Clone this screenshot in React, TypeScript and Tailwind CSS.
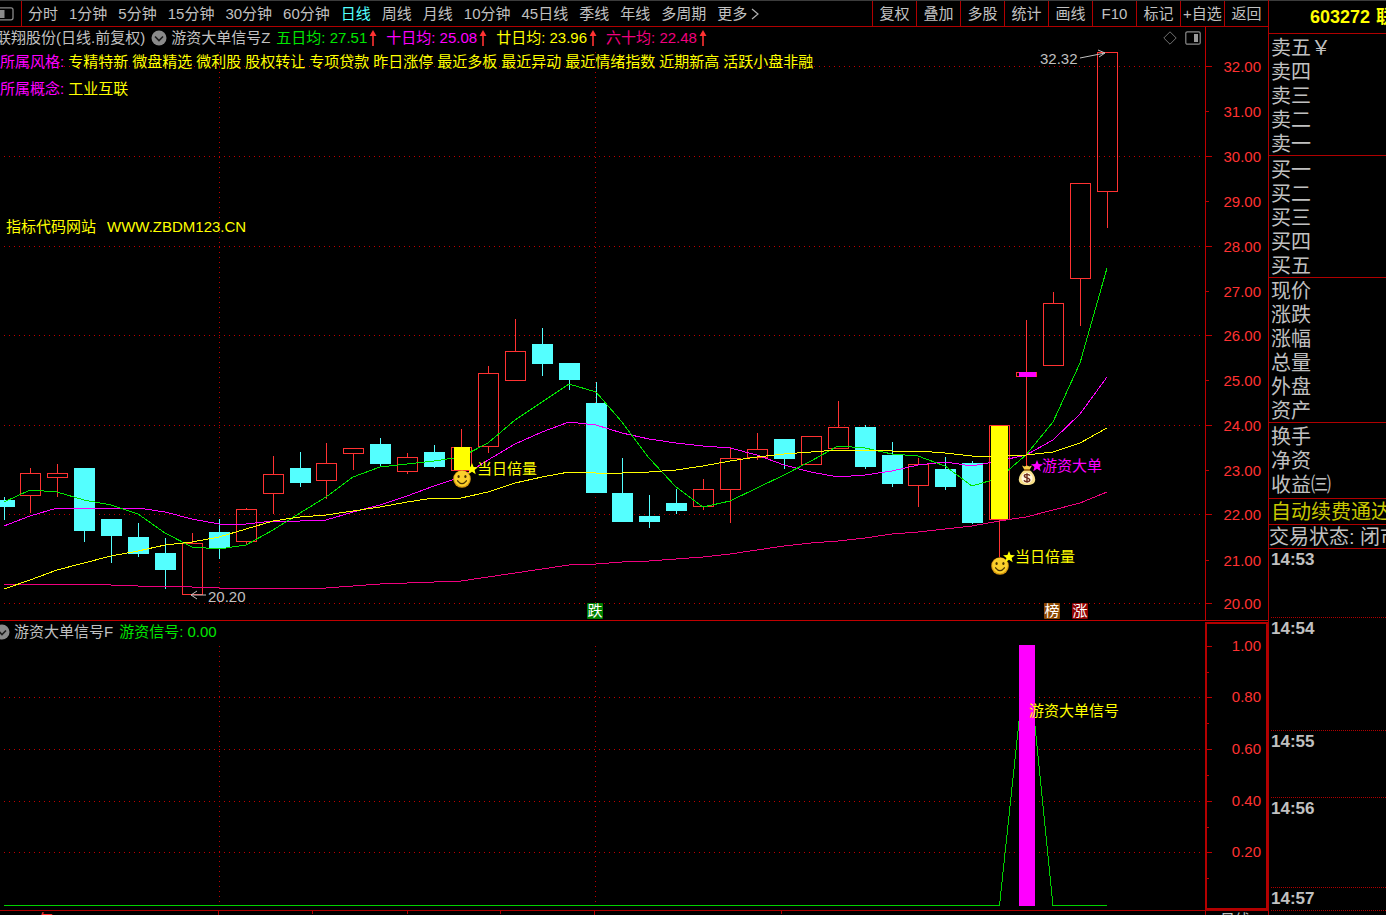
import { useState } from "react";

type Kind = "up" | "down";

interface Candle {
  kind: Kind;
  top: number;
  bottom: number;
  high: number;
  low: number;
}

const FONT = "font-['Liberation_Sans','Noto_Sans_CJK_SC',sans-serif]";

const PERIODS = [
  "分时", "1分钟", "5分钟", "15分钟", "30分钟", "60分钟", "日线", "周线", "月线",
  "10分钟", "45日线", "季线", "年线", "多周期",
];

const TOOLS = ["复权", "叠加", "多股", "统计", "画线", "F10", "标记", "+自选", "返回"];

const AVERAGES = [
  { label: "五日均", value: "27.51", color: "text-[#00e600]" },
  { label: "十日均", value: "25.08", color: "text-[#ff00ff]" },
  { label: "廿日均", value: "23.96", color: "text-[#ffff00]" },
  { label: "六十均", value: "22.48", color: "text-[#f0007f]" },
];

const STYLES = [
  "专精特新", "微盘精选", "微利股", "股权转让", "专项贷款", "昨日涨停", "最近多板",
  "最近异动", "最近情绪指数", "近期新高", "活跃小盘非融",
];

// kind, body top, body bottom, high, low
const RAW: [Kind, number, number, number, number][] = [
  ["down", 500, 507, 497, 520],
  ["up", 473, 496, 468, 513],
  ["up", 473, 478, 464, 497],
  ["down", 468, 531, 468, 542],
  ["down", 519, 536, 519, 563],
  ["down", 537, 554, 523, 557],
  ["down", 553, 570, 538, 589],
  ["up", 543, 595, 533, 595],
  ["down", 532, 548, 519, 559],
  ["up", 509, 542, 508, 544],
  ["up", 474, 494, 456, 514],
  ["down", 468, 483, 452, 487],
  ["up", 463, 481, 443, 499],
  ["up", 448, 454, 448, 470],
  ["down", 444, 464, 438, 467],
  ["up", 457, 472, 453, 474],
  ["down", 452, 467, 445, 468],
  ["up", 447, 471, 429, 471],
  ["up", 373, 447, 366, 453],
  ["up", 351, 381, 319, 381],
  ["down", 344, 364, 328, 376],
  ["down", 363, 380, 363, 390],
  ["down", 403, 493, 382, 493],
  ["down", 493, 522, 458, 522],
  ["down", 516, 522, 495, 528],
  ["down", 503, 511, 489, 514],
  ["up", 489, 507, 479, 510],
  ["up", 458, 490, 447, 523],
  ["up", 449, 458, 433, 460],
  ["down", 439, 459, 439, 469],
  ["up", 436, 465, 436, 465],
  ["up", 427, 449, 401, 449],
  ["down", 427, 467, 425, 469],
  ["down", 455, 484, 442, 487],
  ["up", 464, 486, 458, 507],
  ["down", 469, 487, 457, 490],
  ["down", 463, 523, 461, 524],
  ["up", 425, 520, 425, 557],
  ["up", 372, 377, 320, 466],
  ["up", 303, 366, 292, 366],
  ["up", 183, 279, 183, 326],
  ["up", 52, 192, 52, 228],
];

const CANDLES: Candle[] = RAW.map(([kind, top, bottom, high, low]) => ({ kind, top, bottom, high, low }));

const candleX = (i: number) => Math.round(3.5 + i * 26.91);

const MA5 = [
  502, 490, 492, 500, 505, 514, 533, 547, 549, 545, 530, 513, 497, 477, 467, 464, 461, 457, 443, 420, 402,
  384, 392, 422, 458, 487, 507, 501, 488, 475, 461, 446, 448, 454, 456, 466, 486, 478, 455, 422, 363, 268,
];
const MA10 = [
  526, 516, 508, 508, 508, 508, 512, 519, 524, 524, 521, 521, 520, 512, 505, 496, 486, 477, 460, 444, 432,
  422, 425, 433, 439, 443, 446, 448, 455, 465, 472, 477, 475, 471, 465, 462, 466, 461, 455, 440, 414, 377,
];
const MA20 = [
  589, 580, 570, 563, 556, 551, 545, 542, 537, 529, 521, 517, 515, 511, 507, 502, 498, 498, 492, 483, 477,
  472, 473, 473, 472, 470, 466, 461, 457, 454, 452, 450, 450, 451, 451, 453, 456, 456, 455, 452, 443, 428,
];
const MA60 = [
  584, 584, 584, 584, 585, 586, 586, 587, 588, 588, 588, 588, 588, 586, 584, 583, 582, 581, 577, 573, 569,
  565, 564, 562, 561, 559, 557, 554, 550, 546, 543, 541, 538, 534, 532, 529, 526, 521, 517, 510, 503, 492,
];

const toPoints = (ys: number[]) => ys.map((y, i) => `${candleX(i)},${y}`).join(" ");

const PRICES = [
  { label: "32.00", y: 66 }, { label: "31.00", y: 111 }, { label: "30.00", y: 156 },
  { label: "29.00", y: 201 }, { label: "28.00", y: 246 }, { label: "27.00", y: 291 },
  { label: "26.00", y: 335 }, { label: "25.00", y: 380 }, { label: "24.00", y: 425 },
  { label: "23.00", y: 470 }, { label: "22.00", y: 514 }, { label: "21.00", y: 560 },
  { label: "20.00", y: 603 },
];

const LEVELS = [
  { label: "1.00", y: 646 }, { label: "0.80", y: 697 }, { label: "0.60", y: 749 },
  { label: "0.40", y: 801 }, { label: "0.20", y: 852 },
];

const TICKS = [
  { time: "14:53", height: "h-[69px]" },
  { time: "14:54", height: "h-[113px]" },
  { time: "14:55", height: "h-[67px]" },
  { time: "14:56", height: "h-[90px]" },
  { time: "14:57", height: "h-[23px]" },
  { time: "15:00", height: "h-[23px]" },
];

function CollapseButton({ label }: { label: string }) {
  return (
    <button type="button" aria-label={label} className="size-4 shrink-0">
      <svg viewBox="0 0 16 16" className="size-4">
        <circle cx="8" cy="8" r="7.5" fill="#8a8a8a" />
        <path d="M4 6.5 8 10.5 12 6.5" fill="none" stroke="#1c1c1c" strokeWidth="1.6" />
      </svg>
    </button>
  );
}

function UpArrow() {
  return (
    <svg viewBox="0 0 8 16" className="h-4 w-2 shrink-0">
      <path d="M4 0 7.5 6H.5Z" fill="#ff3232" />
      <path d="M4 4V16" stroke="#ff3232" strokeWidth="1.6" />
    </svg>
  );
}

function Toolbar() {
  const [period, setPeriod] = useState("日线");

  return (
    <div className="flex h-[27px] items-stretch border-t border-b border-t-[#3c3c3c] border-b-[#b00000] text-[15px] leading-6 whitespace-nowrap text-[#c0c0c0]">
      <button type="button" aria-label="侧栏" className="flex w-[22px] shrink-0 items-center border-r border-[#b00000]">
        <svg viewBox="0 0 14 14" className="size-3.5">
          <rect x="-4" y=".8" width="17" height="12" rx="2" fill="none" stroke="#8a8a8a" strokeWidth="1.3" />
          <rect x="0" y="3" width="4.5" height="8" fill="#8a8a8a" />
        </svg>
      </button>
      <nav className="flex min-w-0 flex-1 gap-[11px] overflow-hidden pl-1.5">
        {PERIODS.map((p) => (
          <button
            key={p}
            type="button"
            onClick={() => setPeriod(p)}
            className={p === period ? "text-[#54ffff]" : "text-[#c0c0c0]"}
          >
            {p}
          </button>
        ))}
        <button type="button" className="flex items-center gap-1">
          更多
          <svg viewBox="0 0 8 12" className="h-3 w-2">
            <path d="M1 1 7 6 1 11" fill="none" stroke="#b0b0b0" strokeWidth="1.2" />
          </svg>
        </button>
      </nav>
      <div className="flex shrink-0">
        {TOOLS.map((t) => (
          <button key={t} type="button" className="w-11 border-l border-[#b00000]">
            {t}
          </button>
        ))}
      </div>
    </div>
  );
}

function Smiley({ x, y }: { x: number; y: number }) {
  return (
    <g transform={`translate(${x} ${y})`}>
      <circle r="8.8" fill="#d99a10" />
      <circle r="7.8" cy="-.4" fill="#fbd02c" />
      <ellipse cx="-3.4" cy="-2.4" rx="1.1" ry="1.5" fill="#4a3200" />
      <ellipse cx="3.4" cy="-2.4" rx="1.1" ry="1.5" fill="#4a3200" />
      <path d="M-4.4 1.8Q0 7.4 4.4 1.8" fill="none" stroke="#4a3200" strokeWidth="1.3" strokeLinecap="round" />
    </g>
  );
}

function MoneyBag({ x, y }: { x: number; y: number }) {
  return (
    <g transform={`translate(${x} ${y})`}>
      <path d="M-5-9.5-2.5-8.5 0-9.5 2.5-8.5 5-9.5 2.5-5H-2.5Z" fill="#f3cf4a" />
      <path d="M-2.5-5C-6-2.5-8.2 1-8.2 4.5-8.2 8.5-5 10 0 10S8.2 8.5 8.2 4.5C8.2 1 6-2.5 2.5-5Z" fill="#f8e08a" />
      <ellipse cy="3" rx="5.6" ry="5.4" fill="#fff6dc" />
      <path d="M-3-5H3" stroke="#8a4b00" strokeWidth="1.4" />
      <path
        d="M2.8.6C2-1-2.6-1.2-2.7 1-2.8 3.4 2.8 2.4 2.8 5 2.7 7.2-2.2 7.2-3 5.2M0-1.8V7.8"
        fill="none"
        stroke="#6b2a1a"
        strokeWidth="1.4"
      />
    </g>
  );
}

function Star({ x, y, fill }: { x: number; y: number; fill: string }) {
  return (
    <path
      transform={`translate(${x} ${y})`}
      d="M0-6 1.6-2 6-1.8 2.6 1 3.7 5.2 0 2.8-3.7 5.2-2.6 1-6-1.8-1.6-2Z"
      fill={fill}
    />
  );
}

function Badge({ x, text, fill }: { x: number; text: string; fill: string }) {
  return (
    <g>
      <rect x={x} y="603" width="16" height="16" rx="1" fill={fill} />
      <text x={x + 8} y="616" textAnchor="middle" fill="#ffffff">{text}</text>
    </g>
  );
}

function PriceChart() {
  return (
    <svg viewBox="0 27 1268 594" className="block h-auto w-full text-[15px]">
      {/* grid */}
      <g stroke="#c00000" strokeDasharray="1 4" shapeRendering="crispEdges">
        {PRICES.filter((_, i) => i % 2 === 0).map((p) => (
          <path key={p.label} d={`M4 ${p.y + 0.5}H1202`} />
        ))}
        <path d="M219.5 52V603M595.5 52V603" />
      </g>

      {/* price axis */}
      <g stroke="#c00000" shapeRendering="crispEdges">
        <path d="M1205.5 27V621M0 620.5H1268" />
        {PRICES.map((p, i) => (
          <path key={p.label} d={`M1206 ${p.y + 0.5}h${i % 2 === 0 ? 6 : 3}`} />
        ))}
      </g>
      <g fill="#ff3232" textAnchor="end">
        {PRICES.map((p) => (
          <text key={p.label} x="1261" y={p.y + 6}>{p.label}</text>
        ))}
      </g>

      {/* candles */}
      <g shapeRendering="crispEdges">
        {CANDLES.map((c, i) => {
          const x = candleX(i);
          const down = c.kind === "down";
          const color = down ? "#54ffff" : "#ff3232";
          return (
            <g key={i} stroke={color} fill={down ? color : "none"}>
              <path d={`M${x + 0.5} ${c.high}V${c.top}M${x + 0.5} ${c.bottom}V${c.low}`} />
              <rect x={x - 9.5} y={c.top + 0.5} width="20" height={c.bottom - c.top - 1} />
            </g>
          );
        })}
      </g>

      {/* moving averages */}
      <g fill="none" shapeRendering="crispEdges">
        <polyline points={toPoints(MA60)} stroke="#f0007f" />
        <polyline points={toPoints(MA10)} stroke="#ff00ff" />
        <polyline points={toPoints(MA5)} stroke="#00e600" />
        <polyline points={toPoints(MA20)} stroke="#ffff00" />
      </g>

      {/* signal bars and marks */}
      <rect x="454" y="447" width="16" height="23" fill="#ffff00" />
      <rect x="991" y="426" width="17" height="93" fill="#ffff00" />
      <rect x="1019" y="372" width="17" height="5" fill="#ff00ff" />
      <Smiley x={462} y={479} />
      <Smiley x={1000} y={566} />
      <MoneyBag x={1027} y={475} />
      <Star x={472} y={469} fill="#ffff00" />
      <Star x={1009} y={557} fill="#ffff00" />
      <Star x={1037} y={466} fill="#ff00ff" />
      <text x="477" y="474" fill="#ffff00">当日倍量</text>
      <text x="1015" y="562" fill="#ffff00">当日倍量</text>
      <text x="1042" y="471" fill="#ff00ff">游资大单</text>

      {/* high and low */}
      <g fill="#c0c0c0">
        <text x="1040" y="64">32.32</text>
        <text x="208" y="602">20.20</text>
      </g>
      <path
        d="M1080 58 1105 53M1098 50 1105 53 1099 57M206 595H191M197 591 191 595 197 599"
        fill="none"
        stroke="#c0c0c0"
      />

      <g fill="#ffff00">
        <text x="6" y="232">指标代码网站</text>
        <text x="107" y="232">WWW.ZBDM123.CN</text>
      </g>

      <Badge x={587} text="跌" fill="#008000" />
      <Badge x={1044} text="榜" fill="#8a4600" />
      <Badge x={1072} text="涨" fill="#900000" />
    </svg>
  );
}

function SignalChart() {
  return (
    <svg viewBox="0 621 1268 289" className="block h-auto w-full text-[15px]">
      <g stroke="#c00000" strokeDasharray="1 4" shapeRendering="crispEdges">
        {LEVELS.slice(1).map((l) => (
          <path key={l.label} d={`M4 ${l.y + 0.5}H1202`} />
        ))}
        <path d="M219.5 646V905M595.5 646V905" />
      </g>

      <g stroke="#c00000" shapeRendering="crispEdges">
        {LEVELS.map((l) => (
          <path key={l.label} d={`M1206 ${l.y + 0.5}h6M1206 ${l.y + 26.5}h3`} />
        ))}
      </g>
      <rect x="1206" y="623" width="61" height="286" fill="none" stroke="#b40000" strokeWidth="2" />
      <g fill="#ff3232" textAnchor="end">
        {LEVELS.map((l) => (
          <text key={l.label} x="1261" y={l.y + 5}>{l.label}</text>
        ))}
      </g>

      <polyline
        points="4,905.5 999.5,905.5 1027,646 1053,905.5 1107,905.5"
        fill="none"
        stroke="#00d200"
        shapeRendering="crispEdges"
      />
      <rect x="1019" y="645" width="16" height="261" fill="#ff00ff" />
      <text x="1029" y="716" fill="#ffff00">游资大单信号</text>
    </svg>
  );
}

function DateAxis() {
  return (
    <svg viewBox="0 910 1268 20" className="block h-auto w-full text-[15px]">
      <g stroke="#b00000" shapeRendering="crispEdges">
        <path d="M0 910.5H1268M218.5 911V930M594.5 911V930M1205.5 910V930" />
        <path d="M312.5 911v3M407.5 911v3M500.5 911v3M781.5 911v3" />
      </g>
      <g fill="#ff3232">
        <text x="5" y="925">2022年</text>
        <text x="220" y="925">2</text>
        <text x="596" y="925">3</text>
      </g>
      <text x="1220" y="925" fill="#c0c0c0">日线</text>
    </svg>
  );
}

function QuoteGroup({ rows, className }: { rows: string[]; className: string }) {
  return (
    <ul className={`border-b border-[#b00000] pl-0.5 ${className}`}>
      {rows.map((r) => (
        <li key={r} className="h-6 leading-[26px]">{r}</li>
      ))}
    </ul>
  );
}

function Sidebar() {
  return (
    <aside className="w-[118px] shrink-0 overflow-hidden border-l border-[#b00000] text-xl whitespace-nowrap text-[#c0c0c0]">
      <h1 className="flex h-[34px] items-center gap-1.5 border-t border-b border-t-[#3c3c3c] border-b-[#b00000] pl-[41px] text-lg font-bold text-[#ffff00]">
        <span>603272</span>
        <span>联翔股份</span>
      </h1>
      <QuoteGroup rows={["卖五￥", "卖四", "卖三", "卖二", "卖一"]} className="pt-px" />
      <QuoteGroup rows={["买一", "买二", "买三", "买四", "买五"]} className="pt-px" />
      <QuoteGroup rows={["现价", "涨跌", "涨幅", "总量", "外盘", "资产"]} className="" />
      <QuoteGroup rows={["换手", "净资", "收益㈢"]} className="pt-px pb-0.5" />
      <p className="h-[26px] border-b border-[#b00000] pl-0.5 leading-[26px]">
        <a href="#renew" className="text-[#c8c800]">自动续费通达信</a>
      </p>
      <p className="h-6 border-b border-[#b00000] leading-6">交易状态: 闭市</p>
      <ul className="text-[17px] leading-[22px] font-bold">
        {TICKS.map((t) => (
          <li key={t.time} className={`ml-0.5 border-b border-dotted border-[#b00000] ${t.height}`}>
            {t.time}
          </li>
        ))}
      </ul>
    </aside>
  );
}

export default function App() {
  return (
    <div className={`flex h-screen overflow-hidden bg-black ${FONT}`}>
      <main className="min-w-0 flex-1">
        <Toolbar />

        <section className="relative">
          <PriceChart />
          <div className="absolute inset-x-0 top-0 overflow-hidden text-[15px] whitespace-nowrap">
            <div className="flex h-[22px] items-center text-[#c0c0c0]">
              <span className="-ml-1">联翔股份(日线.前复权)</span>
              <span className="ml-1.5 flex items-center gap-1">
                <CollapseButton label="主图指标" />
                游资大单信号Z
              </span>
              <div className="ml-1.5 flex gap-[9px]">
                {AVERAGES.map((a) => (
                  <span key={a.label} className={`flex items-center gap-0.5 ${a.color}`}>
                    {a.label}: {a.value}
                    <UpArrow />
                  </span>
                ))}
              </div>
              <div className="mr-[67px] ml-auto flex items-center gap-2">
                <button type="button" aria-label="标记点">
                  <svg viewBox="0 0 14 14" className="size-3.5">
                    <path d="M7 .8 13.2 7 7 13.2.8 7Z" fill="none" stroke="#707070" />
                  </svg>
                </button>
                <button type="button" aria-label="分栏">
                  <svg viewBox="0 0 16 14" className="h-3.5 w-4">
                    <rect x=".8" y=".8" width="14.4" height="12.4" rx="1.5" fill="none" stroke="#8a8a8a" strokeWidth="1.2" />
                    <rect x="9" y="3" width="4" height="8" fill="#9a9a9a" />
                  </svg>
                </button>
              </div>
            </div>
            <div className="flex h-[26px] items-center gap-1 text-[#ffff00]">
              <span className="text-[#ff00ff]">所属风格:</span>
              {STYLES.map((s) => (
                <span key={s}>{s}</span>
              ))}
            </div>
            <div className="flex h-7 items-center gap-1 text-[#ffff00]">
              <span className="text-[#ff00ff]">所属概念:</span>
              <span>工业互联</span>
            </div>
          </div>
        </section>

        <section className="relative">
          <SignalChart />
          <div className="absolute inset-x-0 top-0 flex h-[22px] items-center gap-1.5 overflow-hidden text-[15px] whitespace-nowrap text-[#c0c0c0]">
            <span className="-ml-1.5 flex items-center gap-1">
              <CollapseButton label="副图指标" />
              游资大单信号F
            </span>
            <span className="text-[#00e600]">游资信号: 0.00</span>
          </div>
        </section>

        <DateAxis />
      </main>
      <Sidebar />
    </div>
  );
}
